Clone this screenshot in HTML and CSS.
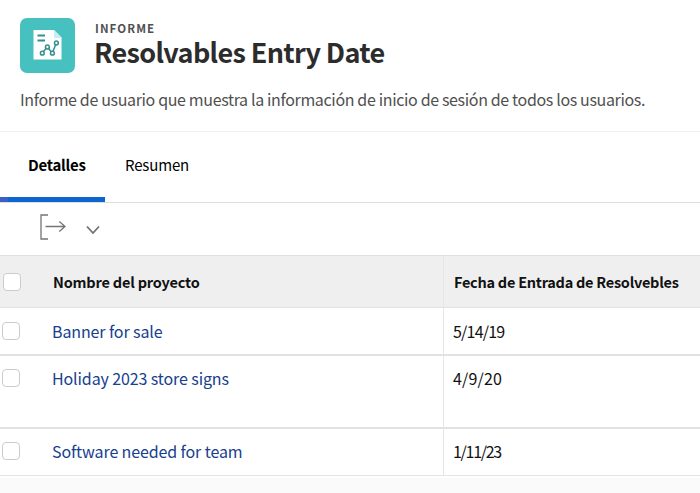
FILE: index.html
```html
<!DOCTYPE html>
<html lang="es">
<head>
<meta charset="utf-8">
<title>Resolvables Entry Date</title>
<link rel="stylesheet" href="styles.css">
</head>
<body>
<header class="header">
  <div class="heading">
    <svg class="logo" width="55" height="55" viewBox="0 0 55 55" aria-hidden="true">
      <rect width="55" height="55" rx="7" fill="#47c1bf"/>
      <path d="M13.500 12H34l7.500 7.500v22h-28z" fill="#fff"/>
      <path d="M34 12l7.500 8H34z" fill="#c8eeed"/>
      <path d="M17.500 17.500H25M17.500 22.500H25" stroke="#2f9292" stroke-width="2.200"/>
      <g fill="#fff" stroke="#358f91" stroke-width="1.500">
        <path d="M22.300 35l5-6 5 6 4-10" fill="none"/>
        <circle cx="22.300" cy="35.200" r="1.900"/>
        <circle cx="27.400" cy="29" r="1.900"/>
        <circle cx="32.400" cy="35.200" r="1.900"/>
        <circle cx="36.400" cy="25" r="1.900"/>
      </g>
    </svg>
    <div class="titles">
      <div class="kind"><span>INFORME</span></div>
      <h1 class="title"><span>Resolvables Entry Date</span></h1>
    </div>
  </div>
  <p class="description"><span>Informe de usuario que muestra la información de inicio de sesión de todos los usuarios.</span></p>
</header>
<nav class="tabs">
  <a class="tab tab-active"><span>Detalles</span></a>
  <a class="tab"><span>Resumen</span></a>
</nav>
<div class="toolbar">
  <svg width="28" height="28" viewBox="0 0 28 28" fill="none" stroke="#747474" stroke-width="1.300" aria-hidden="true">
    <path d="M9 2H2V26H9M6.500 13.500H26M20.300 8.500L26 13.500L20.300 18.500"/>
  </svg>
  <svg class="chevron" width="14" height="10" viewBox="0 0 14 10" fill="none" stroke="#6e6e6e" stroke-width="1.700" aria-hidden="true">
    <path d="M1 1.500L7 8L13 1.500"/>
  </svg>
</div>
<main class="table">
  <div class="row row-head">
    <div class="check"><i class="box"></i></div>
    <div class="cell name"><span>Nombre del proyecto</span></div>
    <div class="cell date"><span class="date-label">Fecha de Entrada de Resolvebles</span></div>
  </div>
  <div class="row">
    <div class="check"><i class="box"></i></div>
    <div class="cell name"><a>Banner for sale</a></div>
    <div class="cell date"><span class="tight">5/14/19</span></div>
  </div>
  <div class="row row-tall">
    <div class="check"><i class="box"></i></div>
    <div class="cell name"><a>Holiday 2023 store signs</a></div>
    <div class="cell date"><span class="loose">4/9/20</span></div>
  </div>
  <div class="row row-last">
    <div class="check"><i class="box"></i></div>
    <div class="cell name"><a>Software needed for team</a></div>
    <div class="cell date"><span class="tighter">1/11/23</span></div>
  </div>
</main>
</body>
</html>
```
FILE: styles.css
```css
* { box-sizing: border-box; }
body {
  margin: 0;
  height: 493px;
  overflow: hidden;
  display: flex;
  flex-direction: column;
  background: #fafafa;
  color: #111;
  font: 16px/24px "Noto Sans CJK SC", "Open Sans", sans-serif;
  white-space: nowrap;
}
.header {
  height: 132px;
  padding: 18px 20px 0;
  background: #fff;
  border-bottom: 1px solid #f0f0f0;
}
.heading { display: flex; height: 55px; }
.titles { margin-left: 19px; }
.logo { display: block; }
.kind {
  margin: 3px 0 0 1px;
  font-size: 11.5px;
  font-weight: 700;
  line-height: 14px;
  letter-spacing: 1.1px;
  color: #505050;
}
.title {
  margin: 0;
  font-size: 27px;
  font-weight: 700;
  line-height: 34px;
  letter-spacing: -0.65px;
  color: #2c2c2c;
}
.description {
  margin: 14px 0 0;
  font-size: 16px;
  letter-spacing: -0.35px;
  color: #505050;
}
.tabs {
  display: flex;
  height: 71px;
  background: #fff;
  border-bottom: 1px solid #ddd;
}
.tab {
  height: 70px;
  padding: 21px 20px 0;
  font-size: 15px;
  letter-spacing: -0.15px;
  color: #000;
}
.tab-active {
  width: 105px;
  padding-left: 28px;
  font-weight: 700;
  letter-spacing: -0.25px;
  background: linear-gradient(90deg, #3c5fc6 8px, #0d66d0 8px) bottom / 100% 5px no-repeat;
}
.toolbar {
  display: flex;
  height: 52px;
  padding: 10px 0 0 39px;
  background: #fff;
}
.chevron { margin: 12px 0 0 19px; }
.table { background: #fff; border-top: 1px solid #e0e0e0; height: 223px; }
.row {
  display: flex;
  height: 48px;
  border-bottom: 2px solid #e2e2e2;
}
.row-head {
  height: 52px;
  background: #efefef;
  border-bottom: 1px solid #e1e1e1;
  font-size: 14.5px;
  font-weight: 700;
}
.row-tall { height: 73px; }
.row-last { height: 47px; border-bottom: 1px solid #e4e4e4; }
.check { width: 52px; padding: 14px 0 0 2px; }
.row-tall .check, .row-last .check { padding-top: 13px; }
.row-head .check { padding: 17px 0 0 3px; }
.box {
  display: block;
  width: 18px;
  height: 18px;
  background: #fff;
  border: 1px solid #ccc;
  border-radius: 4px;
}
.cell { padding-top: 11px; }
.row-tall .cell, .row-last .cell { padding-top: 10px; }
.row-head .cell { padding-top: 14px; }
.name { width: 391px; letter-spacing: -0.11px; }
.name a { color: #17408f; }
.row-head .name { padding-left: 1px; letter-spacing: -0.19px; }
.date { flex: 1; padding-left: 9px; border-left: 1px solid #e6e6e6; }
.row-head .date { padding-left: 10px; }
.date-label { letter-spacing: -0.26px; }
.tight { letter-spacing: -0.8px; }
.loose { letter-spacing: 0.15px; }
.tighter { letter-spacing: -1.3px; }
```
